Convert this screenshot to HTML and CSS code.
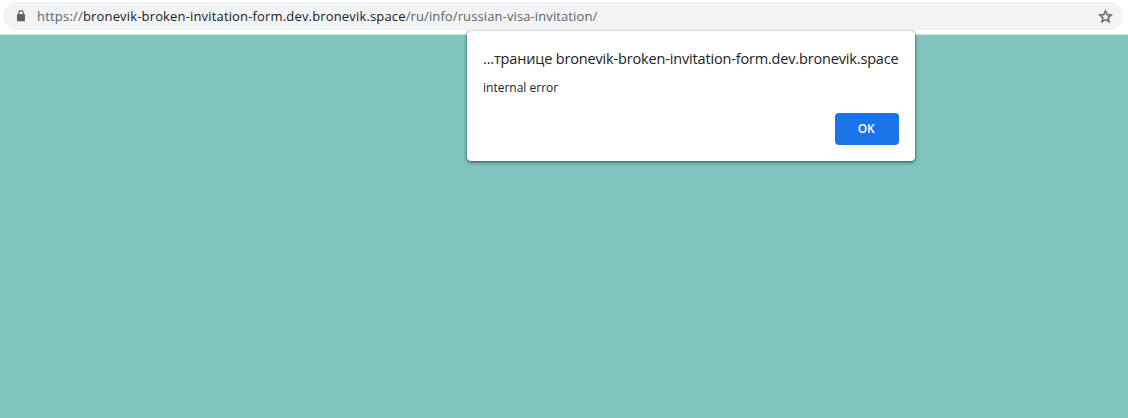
FILE: index.html
```html
<!DOCTYPE html>
<html lang="ru">
<head>
<meta charset="utf-8">
<title>bronevik</title>
<link rel="stylesheet" href="styles.css">
</head>
<body>
<header class="toolbar">
  <div class="omnibox">
    <svg class="lock" width="10" height="12" viewBox="0 0 10 12"><path d="M2.8 5V3a2.2 2.3 0 0 1 4.4 0V5" fill="none" stroke="#5f6368" stroke-width="1.2"/><rect x="1" y="4" width="8" height="7.3" rx="0.6" fill="#5f6368"/></svg>
    <div class="url"><span class="scheme">https://</span><span class="host">bronevik-broken-invitation-form.dev.bronevik.space</span><span class="path">/ru/info/russian-visa-invitation/</span></div>
    <svg class="star" width="17" height="17" viewBox="0 0 24 24"><path fill="#5f6368" stroke="#5f6368" stroke-width=".5" d="M22 9.24l-7.19-.62L12 2 9.19 8.63 2 9.24l5.46 4.73L5.82 21 12 17.27 18.18 21l-1.63-7.03L22 9.24zM12 15.4l-3.76 2.27 1-4.28-3.32-2.88 4.38-.38L12 6.1l1.71 4.04 4.38.38-3.32 2.88 1 4.28L12 15.4z"/></svg>
  </div>
</header>
<main class="page"></main>
<section class="dialog" role="alertdialog">
  <h1 class="title">...транице bronevik-broken-invitation-form.dev.bronevik.space</h1>
  <p class="message">internal error</p>
  <button class="ok">OK</button>
</section>
</body>
</html>
```
FILE: styles.css
```css
* { box-sizing: border-box; }
body {
  margin: 0;
  height: 418px;
  display: flex;
  flex-direction: column;
  overflow: hidden;
  position: relative;
  font-family: "Open Sans", "Noto Sans", sans-serif;
}
.toolbar {
  height: 35px;
  flex: none;
  padding: 2px 5px 0 3px;
  background: #fff;
  border-bottom: 1px solid #dadbdd;
}
.omnibox {
  height: 28px;
  border-radius: 14px;
  background: #f1f3f4;
  display: flex;
  align-items: center;
  padding: 0 9px 0 13px;
}
.lock { margin-right: 11px; }
.url {
  flex: 1;
  font-size: 13px;
  line-height: 28px;
  white-space: nowrap;
  color: #5f6368;
}
.scheme { letter-spacing: .2px; }
.host { color: #202124; letter-spacing: .16px; }
.path { letter-spacing: .11px; }
.page { flex: 1; background: #81c6be; }
.dialog {
  position: absolute;
  left: 467px;
  top: 31px;
  width: 448px;
  height: 130px;
  padding: 16px;
  display: flex;
  flex-direction: column;
  background: #fff;
  border-radius: 4px;
  box-shadow: 0 0 1px rgba(0,0,0,.55), 0 1px 3px rgba(0,0,0,.4), 0 2px 5px rgba(0,0,0,.22);
  color: #202124;
}
.title {
  margin: 0;
  font-size: 14.5px;
  font-weight: 400;
  line-height: 23px;
  letter-spacing: -.165px;
  white-space: nowrap;
}
.message {
  margin: 8px 0 0;
  font-size: 12px;
  line-height: 20px;
}
.ok {
  margin: auto 0 0 auto;
  width: 64px;
  height: 32px;
  padding: 0 2px 1px 0;
  border: 0;
  border-radius: 4px;
  background: #1a73e8;
  color: #fff;
  font: 600 12px "Open Sans", sans-serif;
  letter-spacing: -.3px;
}
```
